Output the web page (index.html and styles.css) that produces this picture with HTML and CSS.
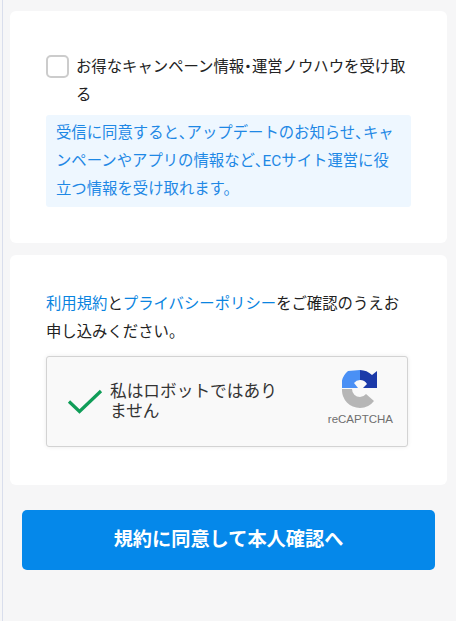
FILE: index.html
```html
<!DOCTYPE html>
<html lang="ja">
<head>
  <meta charset="UTF-8" />
  <meta name="viewport" content="width=device-width, initial-scale=1.0"/>
  <title>お申し込み</title>
  <link rel="stylesheet" href="styles.css">
</head>
<body>
  <main class="page">

    <!-- Campaign opt-in -->
    <section class="card card-optin">
      <label class="optin">
        <span class="checkbox"></span>
        <span class="optin-text">お得なキャンペーン情報<span class="punct">・</span>運営ノウハウを受け取る</span>
      </label>
      <p class="note">受信に同意すると<span class="punct">、</span>アップデートのお知らせ<span class="punct">、</span>キャンペーンやアプリの情報など<span class="punct">、</span>ECサイト運営に役立つ情報を受け取れます。</p>
    </section>

    <!-- Terms + captcha -->
    <section class="card card-terms">
      <p class="terms"><a href="#">利用規約</a>と<a href="#">プライバシーポリシー</a>をご確認のうえお申し込みください。</p>
      <div class="captcha">
        <svg class="captcha-check" width="36" height="26" viewBox="0 0 36 26">
          <path d="M2 12.5 L12.5 22.5 L34 2" fill="none" stroke="#0f9d58" stroke-width="3.2"/>
        </svg>
        <span class="captcha-label">私はロボットではありません</span>
        <div class="captcha-brand">
          <svg width="36" height="38" viewBox="0 0 36 38">
            <path d="M6 1 L18 0 L18 10 A8 8 0 0 0 12 13 L16 18 L0 18 A18 18 0 0 1 6 1 Z" fill="#4a90f5"/>
            <path d="M18 0 A18 18 0 0 1 30 5 L35 1 L35 18 L21 18 L25 14 A8 8 0 0 0 18 10 Z" fill="#1c3aa9"/>
            <path d="M0 19 L10 19 A8 8 0 0 0 18 27 A8 8 0 0 0 24 24 L32 31 A18 18 0 0 1 18 38 A18 18 0 0 1 0 19 Z" fill="#b6b6b6"/>
          </svg>
          <span class="captcha-name">reCAPTCHA</span>
        </div>
      </div>
    </section>

    <button class="btn">規約に同意して本人確認へ</button>
  </main>
</body>
</html>
```

FILE: styles.css
```css
* {
  box-sizing: border-box;
}

html, body {
  height: 100%;
}

body {
  margin: 0;
  background-color: #f6f6f7;
  color: #222;
  font-family: Roboto, "Noto Sans CJK JP", sans-serif;
  font-size: 15.36px;
  line-height: 28px;
  overflow: hidden;
}

.punct {
  font-feature-settings: "palt";
}

.page {
  height: 621px;
  margin-left: 2px;
  padding: 11px 9px 0 7px;
  border-left: 1px solid #d9deec;
}

.card {
  background-color: white;
  border-radius: 6px;
  padding: 0 36px;
}

.card-optin {
  height: 232px;
  padding-top: 42px;
  margin-bottom: 12px;
}

.card-terms {
  height: 230px;
  padding-top: 35px;
  margin-bottom: 25px;
}

.optin {
  display: flex;
  align-items: flex-start;
  gap: 7px;
}

.checkbox {
  flex: none;
  width: 23px;
  height: 23px;
  margin-top: 2px;
  background-color: white;
  border: 2px solid #ccc;
  border-radius: 5px;
}

.note {
  margin: 6px 0 0;
  padding: 4px 10px;
  background-color: #eef7ff;
  border-radius: 3px;
  color: #1e88e5;
}

.terms {
  margin: 0;
}

.terms a {
  color: #0a84e0;
  text-decoration: none;
}

.captcha {
  display: flex;
  align-items: center;
  width: 362px;
  height: 91px;
  margin-top: 10px;
  padding: 0 14px 0 20px;
  background-color: #f9f9f9;
  border: 1px solid #d3d3d3;
  border-radius: 3px;
  box-shadow: 0 0 4px rgba(0, 0, 0, 0.08);
}

.captcha-check {
  flex: none;
}

.captcha-label {
  width: 172px;
  margin-left: 7px;
  font-size: 16.7px;
  line-height: 20px;
  color: #333;
}

.captcha-brand {
  display: flex;
  flex-direction: column;
  align-items: center;
  margin-left: auto;
  margin-top: -6px;
}

.captcha-name {
  margin-top: 3px;
  font-family: "Liberation Sans", sans-serif;
  font-size: 11.5px;
  line-height: 16px;
  color: #6f6f6f;
}

.btn {
  display: block;
  width: 413px;
  height: 60px;
  margin-left: 12px;
  padding: 0 0 4px;
  background-color: #0588ea;
  color: white;
  border: none;
  border-radius: 5px;
  font-family: inherit;
  font-size: 19.2px;
  font-weight: 700;
  cursor: pointer;
}
```
